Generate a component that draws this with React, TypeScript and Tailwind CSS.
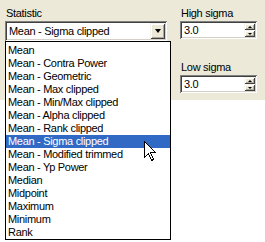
const items = [
  "Mean",
  "Mean - Contra Power",
  "Mean - Geometric",
  "Mean - Max clipped",
  "Mean - Min/Max clipped",
  "Mean - Alpha clipped",
  "Mean - Rank clipped",
  "Mean - Sigma clipped",
  "Mean - Modified trimmed",
  "Mean - Yp Power",
  "Median",
  "Midpoint",
  "Maximum",
  "Minimum",
  "Rank",
];

const SELECTED = "Mean - Sigma clipped";

const sunken =
  "shadow-[inset_1px_1px_#808080,inset_-1px_-1px_#ffffff,inset_2px_2px_#404040,inset_-2px_-2px_#d4d0c8]";
const raised =
  "shadow-[inset_1px_1px_#f4f3ee,inset_-1px_-1px_#404040,inset_2px_2px_#ffffff,inset_-2px_-2px_#aca899]";

function SpinBox({ label, value }: { label: string; value: string }) {
  return (
    <div className="flex flex-col">
      <div className="h-[14px] pl-[1px] leading-[13px]">{label}</div>
      <div className={`flex h-[18px] w-[77px] bg-white p-[2px] ${sunken}`}>
        <div className="flex-1 pl-[2px] leading-[14px]">{value}</div>
        <div className="flex w-[11px] flex-col">
          <div className={`flex h-[7px] items-center justify-center bg-[#ece9d8] ${raised}`}>
            <div className="h-0 w-0 border-x-[2px] border-b-[2px] border-x-transparent border-b-black" />
          </div>
          <div className={`flex h-[7px] items-center justify-center bg-[#ece9d8] ${raised}`}>
            <div className="h-0 w-0 border-x-[2px] border-t-[2px] border-x-transparent border-t-black" />
          </div>
        </div>
      </div>
    </div>
  );
}

export default function App() {
  return (
    <div className="relative h-[242px] w-[265px] overflow-hidden bg-white font-['Liberation_Sans',Arial,sans-serif] text-[11px] tracking-[-0.3px] text-black">
      <div className="flex h-[100px] gap-[13px] bg-[#ece9d8] pl-[5px] pt-[7px]">
        <div className="flex w-[162px] flex-col">
          <div className="h-[14px] pl-[1px] leading-[13px]">Statistic</div>
          <div className={`flex h-[20px] bg-white p-[2px] ${sunken}`}>
            <div className="flex-1 pl-[2px] leading-[16px]">{SELECTED}</div>
            <div className={`flex w-[15px] items-center justify-center bg-[#ece9d8] ${raised}`}>
              <div className="h-0 w-0 border-x-[3.5px] border-t-[4px] border-x-transparent border-t-black" />
            </div>
          </div>
        </div>
        <div className="flex flex-col gap-[22px]">
          <SpinBox label="High sigma" value="3.0" />
          <SpinBox label="Low sigma" value="3.0" />
        </div>
      </div>

      {/* dropdown popup */}
      <div className="absolute left-[5px] top-[41px] w-[166px] border border-black bg-white pt-[2px]">
        {items.map((item) => (
          <div
            key={item}
            className={`h-[13px] whitespace-nowrap pl-[2px] leading-[13px] ${
              item === SELECTED ? "bg-[#316ac5] text-white" : ""
            }`}
          >
            {item}
          </div>
        ))}
      </div>

      {/* mouse pointer */}
      <svg
        className="absolute left-[144px] top-[141px]"
        width="13"
        height="21"
        viewBox="0 0 13 21"
      >
        <polygon
          points="0.5,0.5 0.5,16.5 4.5,12.5 7.5,19.5 9.5,18.5 6.5,11.5 11.5,11.5"
          fill="white"
          stroke="black"
          strokeWidth="1"
          shapeRendering="crispEdges"
        />
      </svg>
    </div>
  );
}
